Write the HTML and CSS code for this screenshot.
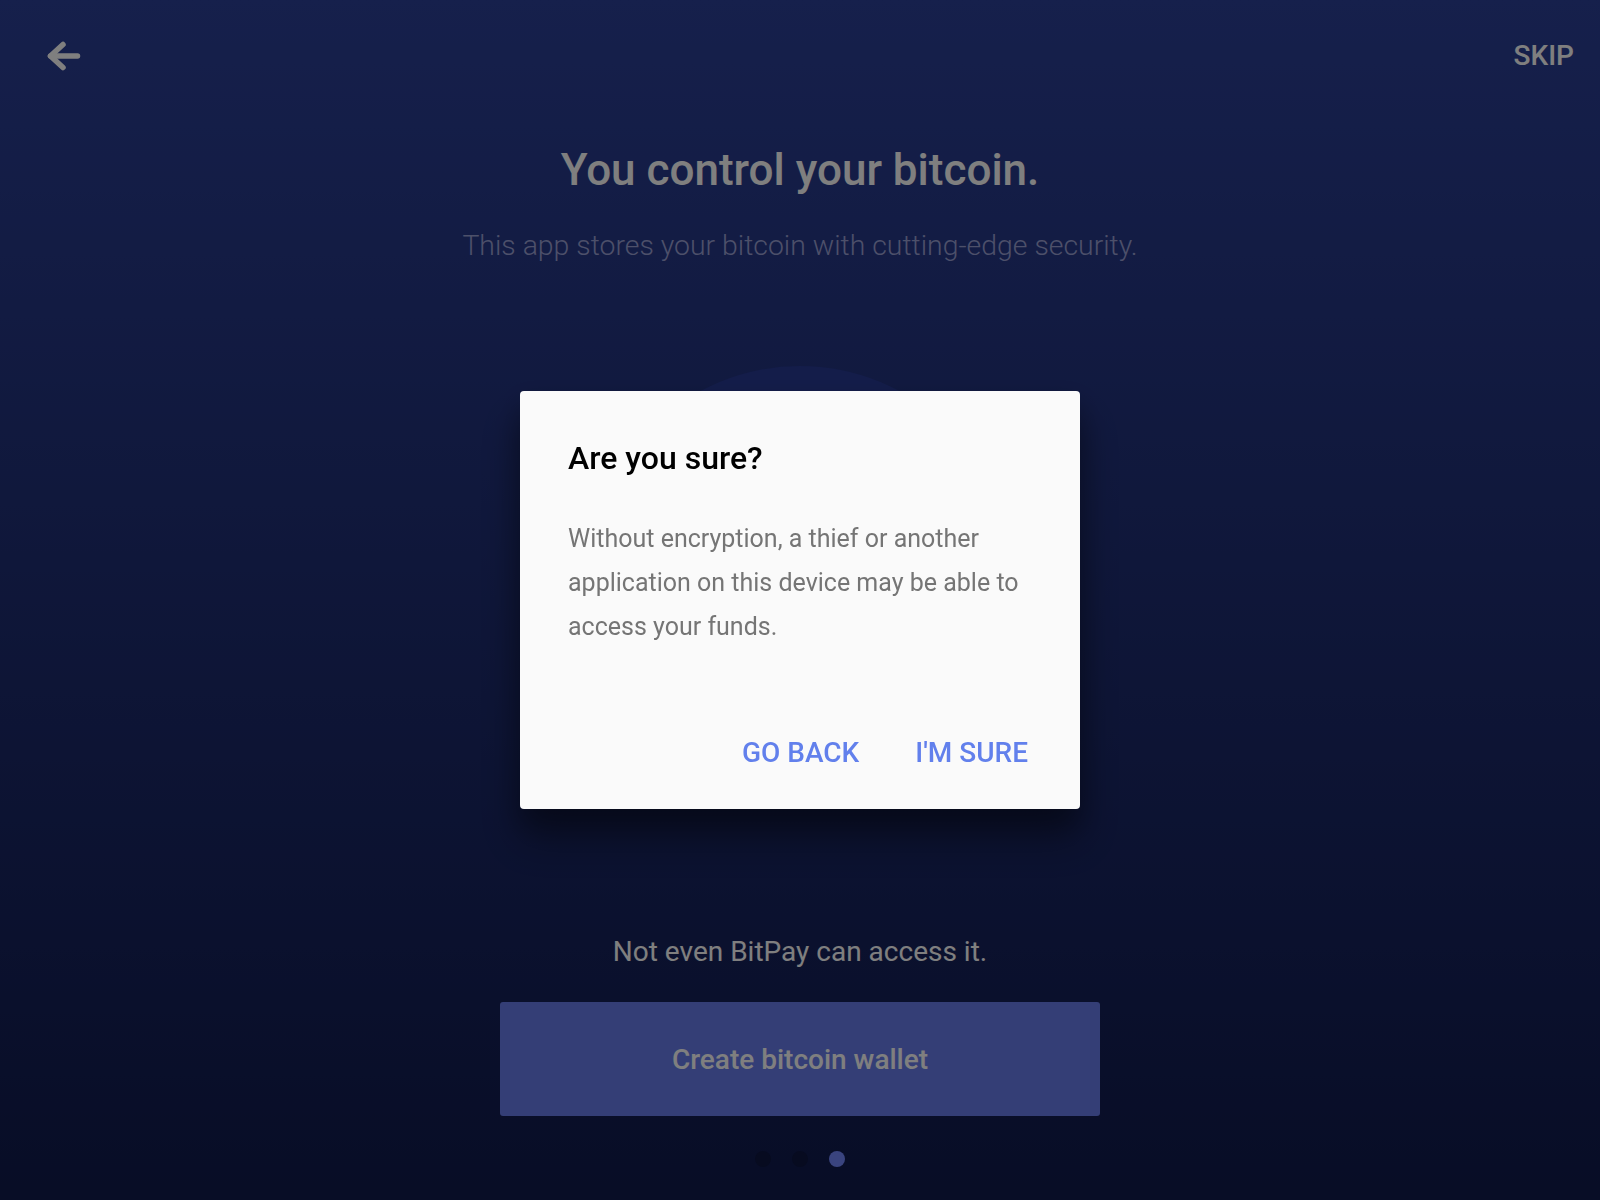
FILE: index.html
```html
<!DOCTYPE html>
<html lang="en">
<head>
<meta charset="utf-8">
<title>BitPay - Onboarding</title>
<link rel="stylesheet" href="styles.css">
</head>
<body>
<div class="screen">
  <header class="topbar">
    <button class="back" aria-label="Back">
      <svg width="40" height="40" viewBox="0 0 40 40" fill="none" stroke="#ffffff" stroke-width="5.5" stroke-linecap="round" stroke-linejoin="round">
        <path d="M6.5 20 H33.5"/>
        <path d="M19 8.5 L6.5 20 L19 31.5"/>
      </svg>
    </button>
    <button class="skip">SKIP</button>
  </header>
  <main class="content">
    <h1 class="title">You control your bitcoin.</h1>
    <p class="subtitle">This app stores your bitcoin with cutting-edge security.</p>
    <div class="illustration"></div>
    <p class="note">Not even BitPay can access it.</p>
    <button class="cta">Create bitcoin wallet</button>
    <div class="dots">
      <span class="dot"></span>
      <span class="dot"></span>
      <span class="dot active"></span>
    </div>
  </main>
</div>
<div class="backdrop"></div>
<div class="alert-wrap">
  <div class="alert">
    <h2 class="alert-title">Are you sure?</h2>
    <p class="alert-message">Without encryption, a thief or another application on this device may be able to access your funds.</p>
    <div class="alert-buttons">
      <button class="alert-btn">GO BACK</button>
      <button class="alert-btn">I'M SURE</button>
    </div>
  </div>
</div>
</body>
</html>
```

FILE: styles.css
```css
* { box-sizing: border-box; }
html, body { margin: 0; padding: 0; }
body {
  font-family: Roboto, "Liberation Sans", Arial, sans-serif;
  width: 1600px;
  height: 1200px;
  overflow: hidden;
}
button {
  font-family: inherit;
  background: none;
  border: 0;
  padding: 0;
  margin: 0;
  cursor: pointer;
}
.screen {
  height: 1200px;
  background: linear-gradient(180deg, #2c4098 0%, #101a4c 100%);
  display: flex;
  flex-direction: column;
}
.topbar {
  height: 80px;
  display: flex;
  justify-content: space-between;
  align-items: flex-start;
  padding: 0 26px 0 44px;
}
.back {
  margin-top: 36px;
  width: 40px;
  height: 40px;
  display: block;
}
.back svg { display: block; }
.skip {
  margin-top: 36px;
  font-size: 28px;
  line-height: 40px;
  font-weight: 500;
  color: #ffffff;
}
.content {
  display: flex;
  flex-direction: column;
  align-items: center;
}
.title {
  margin: 68px 0 0;
  font-size: 44px;
  line-height: 44px;
  font-weight: 500;
  color: #ffffff;
}
.subtitle {
  margin: 37px 0 0;
  font-size: 28.4px;
  line-height: 34px;
  font-weight: 300;
  color: #9aa0d4;
}
.illustration {
  margin-top: 103px;
  width: 420px;
  height: 420px;
  border-radius: 50%;
  background: #283a94;
}
.note {
  margin: 149px 0 0;
  font-size: 28px;
  line-height: 34px;
  color: #ffffff;
}
.cta {
  margin-top: 33px;
  width: 600px;
  height: 114px;
  border-radius: 3px;
  background: #687cec;
  color: #ffffff;
  font-size: 28px;
  font-weight: 500;
}
.dots {
  margin-top: 35px;
  display: flex;
  gap: 21px;
}
.dot {
  width: 16px;
  height: 16px;
  border-radius: 50%;
  background: #0e1640;
}
.dot.active { background: #7489ff; }
.backdrop {
  position: fixed;
  inset: 0;
  background: rgba(0, 0, 0, 0.5);
}
.alert-wrap {
  position: fixed;
  inset: 0;
  display: flex;
  justify-content: center;
  align-items: flex-start;
  padding-top: 391px;
}
.alert {
  width: 560px;
  height: 418px;
  background: #fafafa;
  border-radius: 4px;
  box-shadow: 0 30px 40px rgba(0, 0, 0, 0.35), 0 14px 28px rgba(0, 0, 0, 0.25);
  padding: 47px 52px 36px 48px;
  display: flex;
  flex-direction: column;
}
.alert-title {
  margin: 0;
  font-size: 32px;
  line-height: 40px;
  font-weight: 500;
  color: #000000;
}
.alert-message {
  margin: 39px 0 0;
  font-size: 25px;
  line-height: 44px;
  color: #757575;
}
.alert-buttons {
  margin-top: auto;
  display: flex;
  justify-content: flex-end;
  gap: 56px;
}
.alert-btn {
  font-size: 28px;
  line-height: 40px;
  font-weight: 500;
  color: #6280ec;
}
```
